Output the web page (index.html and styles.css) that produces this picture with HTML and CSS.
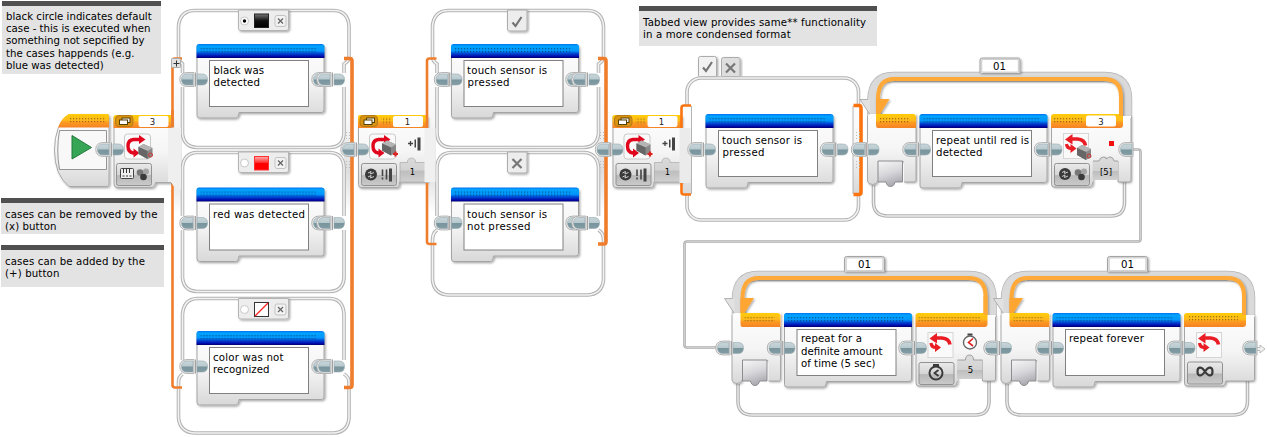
FILE: index.html
```html
<!DOCTYPE html>
<html lang="en">
<head>
<meta charset="utf-8">
<title>Switch and loop blocks</title>
<link rel="stylesheet" href="styles.css">
</head>
<body>
<main class="canvas">
<svg class="diagram" width="1267" height="437" viewBox="0 0 1267 437">
<defs>
  <linearGradient id="blue" x2="0" y2="1"><stop offset="0" stop-color="#0070f0"/><stop offset=".15" stop-color="#00a4ff"/><stop offset=".5" stop-color="#0094fa"/><stop offset=".65" stop-color="#0050d8"/><stop offset=".9" stop-color="#0008a8"/><stop offset="1" stop-color="#000068"/></linearGradient>
  <linearGradient id="org" x2="0" y2="1"><stop offset="0" stop-color="#ffcc08"/><stop offset=".45" stop-color="#ffba1c"/><stop offset=".6" stop-color="#fc9c20"/><stop offset="1" stop-color="#f58226"/></linearGradient>
  <linearGradient id="body" x2="0" y2="1"><stop offset="0" stop-color="#fdfdfd"/><stop offset=".5" stop-color="#f5f5f5"/><stop offset="1" stop-color="#d8d8d8"/></linearGradient>
  <linearGradient id="btn" x2="0" y2="1"><stop offset="0" stop-color="#eaeaea"/><stop offset=".5" stop-color="#d6d6d6"/><stop offset=".55" stop-color="#b8b8b8"/><stop offset="1" stop-color="#cacaca"/></linearGradient>
  <linearGradient id="par" x2="0" y2="1"><stop offset="0" stop-color="#dadada"/><stop offset=".5" stop-color="#d2d2d2"/><stop offset=".55" stop-color="#bebebe"/><stop offset="1" stop-color="#d0d0d0"/></linearGradient>
  <linearGradient id="pin" x2="0" y2="1"><stop offset="0" stop-color="#c9d6da"/><stop offset=".48" stop-color="#b8c9ce"/><stop offset=".52" stop-color="#78949d"/><stop offset="1" stop-color="#839ca4"/></linearGradient>
  <linearGradient id="slot" x2=".3" y2="1"><stop offset="0" stop-color="#f6f6f6"/><stop offset=".55" stop-color="#d8d8dc"/><stop offset="1" stop-color="#acacb2"/></linearGradient>
  <linearGradient id="neck" gradientUnits="userSpaceOnUse" x1="0" x2="0" y1="60" y2="240"><stop offset="0" stop-color="#fff"/><stop offset=".35" stop-color="#f6f6f6"/><stop offset=".62" stop-color="#dedede"/><stop offset=".85" stop-color="#fff"/></linearGradient>
  <linearGradient id="blk" x2="0" y2="1"><stop offset="0" stop-color="#777"/><stop offset=".5" stop-color="#111"/><stop offset="1" stop-color="#000"/></linearGradient>
  <linearGradient id="rd" x2="0" y2="1"><stop offset="0" stop-color="#ffb0b0"/><stop offset=".45" stop-color="#ff3030"/><stop offset=".5" stop-color="#f00"/></linearGradient>
  <pattern id="dots" width="3" height="3" patternUnits="userSpaceOnUse"><rect x="1" y="1" width="1.2" height="1.3" opacity=".38"/></pattern>
  <filter id="sh" x="-10%" y="-10%" width="125%" height="125%"><feDropShadow dx="1.2" dy="1.2" stdDeviation=".9" flood-opacity=".35"/></filter>

  <g id="pinL"><path d="M-1 -6.900H-8Q-15.200 -6.700 -15.200 0T-8 6.900H-1Z" fill="#f1f1f1" stroke="#b0b0b0"/><path d="M-2 -5.500H-8Q-13.500 -5.500 -13.500 0T-8 5.500H-2Z" fill="url(#pin)" stroke="#94a8af" stroke-width=".6"/></g>
  <g id="pinR"><path d="M2 -5.500H7Q12.500 -5.500 12.500 0T7 5.500H2Z" fill="url(#pin)" stroke="#94a8af" stroke-width=".6"/></g>
  <g id="pins"><use href="#pinL"/><path d="M-.7 -7H1.300V7H-.7Z" fill="#f4f4f4"/><path d="M.3 -7V7" stroke="#8c8c8c"/><use href="#pinR"/></g>

  <g id="node">
    <g filter="url(#sh)"><path d="M.5 2V71.500Q.5 74 3 74H39Q42 74 42.500 68.500H125Q127.500 68.500 127.500 66V2Z" fill="url(#body)" stroke="#a4a4a4"/></g>
    <path d="M0 14V2.500Q0 0 2.500 0H125Q128 0 128 2.500V14Z" fill="url(#blue)"/>
    <rect x="4" y="3" width="116" height="6" fill="url(#dots)"/>
    <rect x="13" y="16.500" width="99" height="46" fill="#fff" stroke="#808080"/>
  </g>

  <g id="x" stroke="#666" stroke-width="1.300"><rect x="-5" y="-5" width="11" height="11" rx="2" fill="#f2f2f2" stroke="#c2c2c2" stroke-width="1"/><path d="M-2 -2L3 3M3 -2L-2 3"/></g>
  <g id="case"><path d="M0 0H50V18.500Q50 20.500 47.500 20.500H2.500Q0 20.500 0 18.500Z" fill="#ededed" stroke="#b4b4b4" filter="url(#sh)"/><circle cx="6" cy="11" r="4" fill="#fff" stroke="#c8c8c8"/><use href="#x" x="41.500" y="10.500"/></g>
  <path id="tab" d="M0 0H19.500V19Q19.500 21 17.500 21H2Q0 21 0 19Z" fill="#ededed" stroke="#ababab" filter="url(#sh)"/>
  <path id="check" d="M0 5.500L3 9L9 0" fill="none" stroke="#757575" stroke-width="2.200"/>
  <path id="cross" d="M0 0L9 9M9 0L0 9" stroke="#777" stroke-width="2.200"/>

  <g id="brick"><path d="M0 3L5 0L14 4L14 12L9 15L0 10Z" fill="#888"/><path d="M0 3L5 0L14 4L9 7Z" fill="#b4b4b4"/><path d="M0 3L9 7V15L0 10Z" fill="#666"/></g>
  <g id="switchIcon"><rect width="26" height="25" rx="3" fill="#fafafa" stroke="#c9c9c9"/><path d="M16 5.500H9Q3.500 6 3.500 12Q3.500 18.500 9 19H10" fill="none" stroke="#e1061d" stroke-width="3.400"/><path d="M14.500 1L21 5.500L14.500 10Z" fill="#e1061d"/><path d="M9 14.500L15 19L9 23.500Z" fill="#e1061d"/></g>
  <g id="loopIcon"><rect width="25" height="25" fill="#fafafa" stroke="#d6d6d6"/><path d="M8 5.500H14Q21 6 22 12" fill="none" stroke="#ea1c24" stroke-width="3.600"/><path d="M9 .5L1.500 6L9 11Z" fill="#ea1c24"/><path d="M3 10.500Q3.500 15 8 15" fill="none" stroke="#ea1c24" stroke-width="3.200"/><path d="M7 10.500L13 15L7 19.500Z" fill="#ea1c24"/></g>
  <g id="balls"><circle cx="10" cy="3" r="3" fill="#a5a5a5"/><circle cx="4" cy="4" r="3.300" fill="#777"/><circle cx="7.500" cy="8.500" r="3.300" fill="#3a3a3a"/></g>
  <g id="cmp"><circle cx="6" cy="6" r="6" fill="#3a3a3a"/><path d="M3 4.500L6 3L5.500 5.500L9 4M3 8.500L6 7L5.500 9.500L9 8" fill="none" stroke="#ccc"/></g>
  <g id="touch" fill="#444"><path d="M-5 6H0M-2.500 3.500V8.500" stroke="#444" stroke-width="1.300"/><rect x="1.500" y="2" width="1.500" height="8"/><rect x="4.500" width="3" height="13"/></g>
  <g id="touchMode"><use href="#cmp"/><path d="M17.500 1V7.500M17.500 9V11M21.500 1V11" stroke="#444" stroke-width="1.600"/><path d="M25.500 0V13" stroke="#444" stroke-width="3"/></g>
  <rect id="mode" width="35" height="22" rx="2" fill="url(#btn)" stroke="#929292"/>
  <g id="stack"><rect width="17.500" height="11" rx="3.500" fill="#d99310" stroke="#b37a18"/><rect x="6.500" y="2.500" width="8" height="4.500" fill="#eee" stroke="#584000"/><rect x="4" y="4.500" width="8" height="4.500" fill="#fff" stroke="#584000"/></g>
  <g id="grip" fill="#bbb"><path d="M0 0h1v1h-1zM3 0h1v1h-1zM0 3h1v1h-1zM3 3h1v1h-1zM0 6h1v1h-1zM3 6h1v1h-1z"/></g>

  <g id="switchHead">
    <path d="M.5 2V70Q.5 73 3 73H39Q41.500 73 41.500 67.500H69V2Z" fill="url(#body)" stroke="#a8a8a8" filter="url(#sh)"/>
    <path d="M0 13.500V2.500Q0 .5 2 .5H69V13.500Z" fill="url(#org)"/>
    <use href="#stack" x="2" y="1"/>
    <rect x="23" y="3" width="10" height="7" fill="url(#dots)"/>
    <rect x="35" y="1.500" width="30" height="11" rx="2" fill="#fff"/>
    <path d="M42 67.500V48H49.500Q49 44 53.500 43.500Q58 44 57.500 48H68V67.500Z" fill="url(#par)" stroke="#aaa" stroke-width=".7"/>
    <use href="#switchIcon" x="11.500" y="19.500"/><use href="#brick" x="24" y="26"/>
    <path d="M35 39.500H40M37.500 37V42" stroke="#d22" stroke-width="2.200"/>
    <use href="#touch" x="55" y="23"/>
    <use href="#mode" x="3.500" y="49"/><use href="#touchMode" x="7" y="54"/>
  </g>

  <g id="loopLeft">
    <path d="M860 99.500H870V115Z" fill="#e2e2e2"/><path d="M868 99.500H860L870 114.500" fill="none" stroke="#aaa" stroke-width=".9"/>
    <path d="M867.500 116L870 114H916V180Q916 182 914 182H904V161H877.500V181Q877 184.500 872.500 184.500Q868 184.500 867.500 181Z" fill="url(#body)" filter="url(#sh)"/>
    <path d="M867.500 116V181Q868 184.500 872.500 184.500Q877 184.500 877.500 181M904 182H914Q916 182 916 180V128" fill="none" stroke="#a8a8a8"/>
    <path d="M878 161H902.500V182H895Q894 186.500 890.500 186.500T886 182H878Z" fill="url(#slot)" stroke="#8c8c90"/>
  </g>
  <g id="loopHeadL">
    <path d="M876 99H889.500L880 114H876Z" fill="#ffa632" filter="url(#sh)"/>
    <path d="M876 114H913Q916 114 916 117V128H878Q876 128 876 125Z" fill="url(#org)"/><rect x="880" y="117" width="30" height="6" fill="url(#dots)"/>
  </g>
  <g id="loopRight">
    <path d="M1051.500 116H1131V180Q1131 182 1129 182H1118V161H1093V184Q1092 187 1090 187H1054Q1051.500 187 1051.500 184Z" fill="url(#body)" filter="url(#sh)"/>
    <path d="M1051.500 128V184Q1051.500 187 1054 187H1090Q1092 187 1093 182M1118 161V182H1129Q1131 182 1131 180V118" fill="none" stroke="#a6a6a6"/>
    <path d="M1092.500 180V161H1118V180Z" fill="url(#par)"/><path d="M1051 128V117Q1051 114 1054 114H1123V125Q1123 128 1120 128Z" fill="url(#org)"/>
    <use href="#mode" x="1054.500" y="163.500"/><use href="#loopIcon" x="1063.500" y="133.500"/>
  </g>
  <g id="loopFrame" fill="none">
    <path d="M873.500 185V203Q874 216 888 216H1111Q1124 216 1124.500 203V182" stroke="#b0b0b0" stroke-width="3.600"/><path d="M873.500 185V203Q874 216 888 216H1111Q1124 216 1124.500 203V182" stroke="#ececec" stroke-width="1.400"/>
    <path d="M872.500 116V99Q873 77 893 77H1105Q1127 77 1127 99V118" stroke="#b4b4b4" stroke-width="10.500"/><path d="M872.500 117V99Q873 77 893 77H1105Q1127 77 1127 99V119" stroke="#dadada" stroke-width="9"/>
    <path d="M878 116V99Q878 79 894 79H1104Q1121 79 1121 97V116" stroke="#ffa938" stroke-width="4" filter="url(#sh)"/>
  </g>
  <g id="label"><path d="M0 15V2Q0 0 2 0H38Q40 0 40 2V15" fill="#e0e0e0" stroke="#a4a4a4" filter="url(#sh)"/><rect x="1.800" y="1.500" width="36.500" height="12.500" rx="1.500" fill="#fff" stroke="#bbb" stroke-width=".6"/></g>
</defs>

<!-- wire joining the two rows -->
<path class="rail-dark" d="M1133 149.500H1138.500Q1140.500 149.500 1140.500 152V239Q1140.500 241.500 1138 241.500H687Q684.500 241.500 684.500 244V345Q684.500 347.500 687 347.500H718"/>
<path class="rail-thin" d="M1133 149.500H1138.500Q1140.500 149.500 1140.500 152V239Q1140.500 241.500 1138 241.500H687Q684.500 241.500 684.500 244V345Q684.500 347.500 687 347.500H718"/>

<!-- start block -->
<g filter="url(#sh)"><path d="M69 114.500H107Q109 114.500 109 117V184Q109 186.500 107 186.500H69Q54.500 175 54.500 150T69 114.500Z" fill="url(#body)" stroke="#a8a8a8"/></g>
<path d="M58 127.500Q62 117 69 114H107Q109 114 109 116V127.500Z" fill="url(#org)"/>
<rect x="69" y="116.500" width="37" height="6" fill="url(#dots)"/>
<path d="M59.500 130.500H106.500V169.500H59.500Q56 150 59.500 130.500Z" fill="#f8f8f8" stroke="#949494"/>
<path d="M72 135.500L91.500 147.500L72 159Z" fill="#36a556" stroke="#237a3c"/>

<!-- colour switch -->
<rect x="174" y="60" width="8" height="325" fill="url(#neck)"/><rect x="344" y="60" width="8" height="325" fill="url(#neck)"/>
<g class="rails">
  <path id="a1" d="M182.500 73V64Q178.500 61 178.500 57V26Q180 11 194 10.500H334Q348 11 349 26V57Q349 61 344 64V73M182.500 87V134Q184 147 197 147.500H330Q343 147 344 134V87"/>
  <path id="a2" d="M182.500 216V167Q184 153 197 152.500H330Q343 153 344 167V216M182.500 230V278Q184 291 197 291.500H330Q343 291 344 278V230"/>
  <path id="a3" d="M182.500 360V314Q184 299 197 298.500H330Q343 299 344 314V360M182.500 374Q178.500 377 178.500 382V418Q180 432 194 433H334Q348 432 349 418V382Q349 377 344 374"/>
</g>
<g class="cores"><use href="#a1"/><use href="#a2"/><use href="#a3"/></g>
<path class="slim" d="M182 58.500H175Q172.500 58.500 172.500 61V127M172.500 183V385Q172.500 387.500 175 387.500H182"/>
<path class="bar" d="M344 58.500H350Q352 58.500 352 61V385Q352 387.500 350 387.500H344"/>
<g id="colourHead">
  <path d="M114 117V184Q114 187.500 117 187.500H151Q155 187.500 155.500 182.500H171V117Z" fill="url(#body)" stroke="#a8a8a8" filter="url(#sh)"/>
  <path d="M168 128H181V190Q175 190 171 182H168Z" fill="#efefef"/>
  <path d="M113.500 128V117Q113.500 115 116 115H171V128Z" fill="url(#org)"/><path class="slim" d="M172.500 110V127.500"/>
  <use href="#stack" x="115.500" y="115.500"/><rect x="138.500" y="116" width="30" height="11" rx="2" fill="#fff"/>
  <use href="#switchIcon" x="124.500" y="134"/><use href="#brick" x="138.500" y="144"/><circle cx="150.500" cy="155" r="2" fill="none" stroke="#c33"/>
  <use href="#mode" x="116.500" y="163.500"/><rect x="120.500" y="168.500" width="13" height="10" rx="1" fill="#eee" stroke="#444"/><path d="M123.500 169v4M126.500 169v4M129.500 169v4M122.500 176h2M126 176h2M129.500 176h2" stroke="#333"/><use href="#balls" x="136" y="168.500"/>
</g>
<rect x="171.500" y="58.500" width="9" height="9" rx="1" fill="#e2e2e2" stroke="#aaa"/><path d="M173.500 63.500H179.500M176.500 60.500V66.500" stroke="#333"/>
<use href="#case" x="238.500" y="10"/><circle cx="244.500" cy="21" r="1.700"/><rect x="254.500" y="14" width="14" height="13.500" fill="url(#blk)" stroke="#222"/>
<use href="#case" x="238.500" y="152"/><rect x="254.500" y="156.500" width="14" height="13.500" fill="url(#rd)" stroke="#f33"/>
<use href="#case" x="238.500" y="298.500"/><rect x="254.500" y="302.500" width="14" height="14" fill="#fff" stroke="#333"/><path d="M255 316L268 303" stroke="#f22" stroke-width="1.300"/>
<use href="#node" x="196.500" y="44"/><use href="#node" x="196.500" y="187.500"/><use href="#node" x="196.500" y="331"/>
<use href="#pins" x="195" y="79.500"/><use href="#pinL" x="327" y="79.500"/><use href="#pins" x="332" y="79.500"/>
<use href="#pins" x="195" y="223"/><use href="#pinL" x="327" y="223"/><use href="#pins" x="332" y="223"/>
<use href="#pins" x="195" y="366.500"/><use href="#pinL" x="327" y="366.500"/><use href="#pins" x="332" y="366.500"/>
<use href="#grip" x="346" y="132"/><use href="#grip" x="346" y="161"/>
<use href="#pins" x="111" y="149.500"/>

<!-- touch switch -->
<rect x="428" y="60" width="8" height="182" fill="url(#neck)"/><rect x="598" y="60" width="8" height="182" fill="url(#neck)"/>
<g class="rails">
  <path id="b1" d="M437 73V64Q432.500 61 432.500 57V26Q434 11 448 10.500H588Q602 11 603.500 26V57Q603.500 61 598.500 64V73M437 87V134Q438 147 451 147.500H584Q597 147 598.500 134V87"/>
  <path id="b2" d="M437 216V167Q438 153 451 152.500H584Q597 153 598.500 167V216M437 230Q432.500 233 432.500 240V280Q434 294 448 295H588Q602 294 603.500 280V240Q603.500 233 598.500 230"/>
</g>
<g class="cores"><use href="#b1"/><use href="#b2"/></g>
<use href="#switchHead" x="358" y="114.500"/><rect x="424.500" y="128" width="11" height="54" fill="#f0f0f0"/>
<path class="slim" d="M436.500 58.500H429.500Q427 58.500 427 61V128M427 183V241.500Q427 244 429.500 244H436.500"/>
<path class="bar" d="M598 58.500H604Q606 58.500 606 61V241.500Q606 244 604 244H598"/>
<use href="#tab" x="507.500" y="10"/><use href="#check" x="512.500" y="17"/><use href="#tab" x="507.500" y="152"/><use href="#cross" x="512.500" y="159"/>
<use href="#node" x="451" y="44"/><use href="#node" x="451" y="187.500"/>
<use href="#pins" x="449.500" y="79.500"/><use href="#pinL" x="581" y="79.500"/><use href="#pins" x="587" y="79.500"/>
<use href="#pins" x="449.500" y="223"/><use href="#pinL" x="581" y="223"/><use href="#pins" x="587" y="223"/>
<use href="#grip" x="600" y="132"/><use href="#grip" x="600" y="161"/>
<use href="#pins" x="356" y="149.500"/>

<!-- tabbed switch -->
<path d="M698.500 76V58.500Q698.500 56.500 700.500 56.500H714.500Q716.500 56.500 716.500 58.500V76" fill="#f2f2f2" stroke="#ababab" filter="url(#sh)"/>
<path d="M721.500 76V59.500Q721.500 57.500 723.500 57.500H738Q740 57.500 740 59.500V76" fill="#dedede" stroke="#ababab" filter="url(#sh)"/>
<use href="#check" x="703" y="62"/><use href="#cross" x="726" y="63.500"/>
<g class="rails"><rect id="c1" x="687" y="78" width="171.500" height="142" rx="14"/></g><g class="cores"><use href="#c1"/></g>
<rect x="683" y="106" width="8" height="88" fill="url(#body)"/><rect x="853" y="106" width="8" height="88" fill="url(#body)"/><path d="M691.500 106V194M853 106V194" stroke="#b4b4b4"/>
<use href="#switchHead" x="612.500" y="114.500"/><rect x="679.500" y="128" width="11" height="55" fill="#ebebeb"/>
<path class="slim vivid" d="M691 105.500H684Q681.500 105.500 681.500 108V128M681.500 183V192Q681.500 194.500 684 194.500H691"/>
<path class="bar vivid" d="M853.500 105.500H859Q861 105.500 861 108V192Q861 194.500 859 194.500H853.500"/>
<use href="#grip" x="856" y="132"/><use href="#grip" x="856" y="161"/>
<use href="#node" x="705.500" y="114"/><use href="#pins" x="703" y="149.500"/><use href="#pins" x="835.500" y="149.500"/><use href="#pins" x="610.500" y="149.500"/>

<!-- loops -->
<use href="#loopFrame"/><use href="#loopLeft"/><use href="#loopRight"/><use href="#loopHeadL"/>
<rect x="1054" y="117" width="28" height="6" fill="url(#dots)"/><path d="M1121 97V116" stroke="#ffa938" stroke-width="4"/><rect x="1086" y="115.500" width="30" height="11" rx="2" fill="#fff"/>
<path d="M1093 161H1099Q1100 157 1103.500 157T1106 159Q1108 157 1110.500 157T1114 161H1118" fill="#dadada" stroke="#999" stroke-width=".9"/>
<rect x="1109" y="141" width="5" height="5" fill="#f01010"/><use href="#brick" x="1077" y="145"/><circle cx="1089" cy="156" r="2" fill="none" stroke="#c33"/><use href="#cmp" x="1059" y="168"/><use href="#balls" x="1074" y="168.500"/>
<use href="#label" x="980" y="58"/><use href="#node" x="919.500" y="114"/>
<use href="#pins" x="866.500" y="149.500"/><use href="#pins" x="918" y="149.500"/><use href="#pins" x="1049.500" y="149.500"/><use href="#pinL" x="1134" y="149.500"/>

<g transform="translate(-135.500 199)"><use href="#loopFrame"/><use href="#loopLeft"/><use href="#loopRight"/><use href="#loopHeadL"/>
<path d="M1121 97V116" stroke="#ffa938" stroke-width="4"/><rect x="1054" y="117" width="62" height="6" fill="url(#dots)"/><path d="M1093 161H1101Q1101 156 1105 156T1109 161H1118" fill="#dadada" stroke="#999" stroke-width=".9"/></g>
<circle cx="970" cy="342.500" r="6.500" fill="#fff" stroke="#666" stroke-width="1.400"/><path d="M967.500 334.500H972.500" stroke="#444" stroke-width="2"/><path d="M973 338.500L968.500 342.500L973 346" fill="none" stroke="#d22" stroke-width="1.600"/>
<circle cx="936" cy="373" r="6.500" fill="none" stroke="#3a3a3a" stroke-width="2"/><path d="M933 365H939" stroke="#3a3a3a" stroke-width="2"/><path d="M938.500 370L934.500 373L938.500 376" fill="none" stroke="#3a3a3a" stroke-width="1.800"/>
<use href="#label" x="844.500" y="256.500"/>

<g fill="none"><path d="M1007 384V402Q1007.500 415 1021.500 415H1233Q1247 415 1247.500 402V381" stroke="#b0b0b0" stroke-width="3.600"/><path d="M1007 384V402Q1007.500 415 1021.500 415H1233Q1247 415 1247.500 402V381" stroke="#ececec" stroke-width="1.400"/>
<path d="M1006 315V298Q1006.500 276 1026.500 276H1228Q1250 276 1250 298V317" stroke="#b4b4b4" stroke-width="10.500"/><path d="M1006 316V298Q1006.500 276 1026.500 276H1228Q1250 276 1250 298V318" stroke="#dadada" stroke-width="9"/>
<path d="M1011.500 315V298Q1011.500 278 1027.500 278H1227Q1244 278 1244 296V315" stroke="#ffa938" stroke-width="4" filter="url(#sh)"/></g>
<g transform="translate(133.500 199)"><use href="#loopLeft"/><use href="#loopHeadL"/></g>
<path d="M1184.500 315H1254.500V379Q1254.500 381 1252.500 381H1226Q1225 386 1223 386H1187Q1184.500 386 1184.500 383Z" fill="url(#body)" filter="url(#sh)"/>
<path d="M1184.500 327V383Q1184.500 386 1187 386H1223Q1225 386 1226 381H1252.500Q1254.500 381 1254.500 379V317" fill="none" stroke="#a6a6a6"/>
<path d="M1184 327V316Q1184 313 1187 313H1246V324Q1246 327 1243 327Z" fill="url(#org)"/><rect x="1188" y="316" width="50" height="6" fill="url(#dots)"/><path d="M1244 296V315" stroke="#ffa938" stroke-width="4"/>
<use href="#mode" x="1187.500" y="362"/><use href="#loopIcon" x="1196.500" y="332.500"/><path d="M1205 371.500C1201 365.500 1197.500 367 1197.500 371.500S1201 377.500 1205 371.500S1212.500 367 1212.500 371.500S1209 377.500 1205 371.500Z" fill="none" stroke="#3a3a3a" stroke-width="2.200"/>
<use href="#label" x="1107.500" y="256.500"/>
<use href="#node" x="784" y="313"/><use href="#node" x="1052.500" y="313"/>
<use href="#pins" x="731" y="348"/><use href="#pins" x="782.500" y="348"/><use href="#pins" x="914" y="348"/><use href="#pins" x="999" y="348"/><use href="#pins" x="1051" y="348"/><use href="#pins" x="1182.500" y="348"/>
<path d="M1256 347.500H1260V345L1265 349L1260 353V350.500H1256Z" fill="#f1f1f1" stroke="#b4b4b4" stroke-width=".9"/><use href="#pinL" x="1258" y="348"/>

<!-- block text -->
<g class="words">
  <text x="213.500" y="74" textLength="50.500">black was</text><text x="213.500" y="86" textLength="46.500">detected</text>
  <text x="213" y="218" textLength="92">red was detected</text>
  <text x="213" y="361" textLength="70.500">color was not</text><text x="213" y="373" textLength="56.500">recognized</text>
  <text x="467" y="74" textLength="80">touch sensor is</text><text x="467.500" y="86" textLength="42">pressed</text>
  <text x="467" y="218" textLength="80">touch sensor is</text><text x="467" y="230" textLength="63.500">not pressed</text>
  <text x="722" y="144" textLength="80">touch sensor is</text><text x="722.500" y="156" textLength="42">pressed</text>
  <text x="936" y="144" textLength="93">repeat until red is</text><text x="936" y="156" textLength="46.500">detected</text>
  <text x="801" y="342" textLength="61">repeat for a</text><text x="801" y="355" textLength="81.500">definite amount</text><text x="801" y="367" textLength="74.500">of time (5 sec)</text>
  <text x="1069" y="342" textLength="75">repeat forever</text>
  <text x="993" y="70">01</text><text x="858" y="268">01</text><text x="1121" y="268">01</text>
</g>
<g class="values">
  <text x="152.500" y="124.500">3</text><text x="407.500" y="124.500">1</text><text x="661.500" y="124.500">1</text><text x="1101" y="124.500">3</text>
</g>
<g class="values ink">
  <text x="412.500" y="174.500">1</text><text x="667.500" y="174.500">1</text><text x="1106" y="174.500">[5]</text><text x="970.500" y="372.500">5</text>
</g>
</svg>

<p class="note note-default">black circle indicates default<br>case - this is executed when<br>something not sepcified by<br>the cases happends (e.g.<br>blue was detected)</p>
<p class="note note-remove">cases can be removed by the<br>(x) button</p>
<p class="note note-add">cases can be added by the<br>(+) button</p>
<p class="note note-tabbed">Tabbed view provides same** functionality<br>in a more condensed format</p>
</main>
</body>
</html>
```
FILE: styles.css
```css
body {
  margin: 0;
  background: #fff;
}

.canvas {
  position: relative;
  width: 1267px;
  height: 437px;
  overflow: hidden;
  font-family: "DejaVu Sans", sans-serif;
}

.diagram {
  display: block;
}

/* each frame is drawn twice; the stroke is inherited from its group */
.rails {
  fill: none;
  stroke: #b2b2b2;
  stroke-width: 3.6;
}

.cores {
  fill: none;
  stroke: #f2f2f2;
  stroke-width: 1.6;
}

/* the inner pass re-uses paths that already inherit the rail stroke */
.rail-dark {
  fill: none;
  stroke: #adadad;
  stroke-width: 2.6;
}

.rail-thin {
  fill: none;
  stroke: #cfcfcf;
  stroke-width: 1;
}

.slim {
  fill: none;
  stroke: #f07d2c;
  stroke-width: 2.6;
}

.bar {
  fill: none;
  stroke: #f07d2c;
  stroke-width: 3.6;
}

.vivid {
  stroke: #fb7410;
}

.words text {
  font-size: 10.2px;
  fill: #000;
}

.values {
  font-size: 8.5px;
  fill: #222;
  text-anchor: middle;
}

.ink {
  fill: #000;
}

.note {
  position: absolute;
  box-sizing: border-box;
  margin: 0;
  padding: 5px 0 0 4px;
  border-top: 5px solid #505050;
  background: #e3e3e3;
  color: #000;
  font-size: 10.2px;
  line-height: 12.2px;
  white-space: nowrap;
}

.note-default {
  left: 2px;
  top: 1px;
  width: 159px;
  height: 73px;
}

.note-remove {
  left: 1px;
  top: 198px;
  width: 163px;
  height: 36px;
  padding-top: 6px;
  letter-spacing: 0.08px;
}

.note-add {
  left: 1px;
  top: 245px;
  width: 163px;
  height: 42px;
  padding-top: 6px;
  letter-spacing: 0.12px;
}

.note-tabbed {
  left: 639px;
  top: 6px;
  width: 238px;
  height: 40px;
  padding-top: 6px;
  letter-spacing: 0.13px;
}
```
